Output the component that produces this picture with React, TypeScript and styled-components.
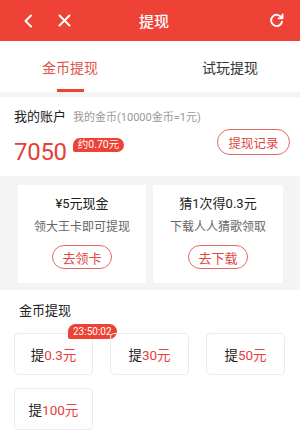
import React, { useState } from 'react'
import styled, { createGlobalStyle } from 'styled-components'

const RED = '#ee4237'
const TEXT_RED = '#e5403a'

const GlobalStyle = createGlobalStyle`
  html, body {
    margin: 0;
    padding: 0;
    background: #f4f4f4;
  }
  body {
    font-family: Roboto, "Noto Sans CJK SC", sans-serif;
    color: #333;
  }
`

const Page = styled.div`
  width: 300px;
  height: 446px;
  overflow: hidden;
  background: #f4f4f4;
  display: flex;
  flex-direction: column;
`

const Header = styled.header`
  height: 41px;
  background: ${RED};
  display: flex;
  align-items: center;
  padding: 0 14px 0 18px;
  color: #fff;
`

const IconButton = styled.span<{ $gap?: number }>`
  width: 20px;
  height: 20px;
  display: flex;
  align-items: center;
  justify-content: center;
  margin-right: ${(p) => p.$gap ?? 0}px;
`

const Title = styled.h1`
  flex: 1;
  margin: 0;
  text-align: center;
  font-size: 15px;
  font-weight: 500;
  padding-right: 32px;
`

const Tabs = styled.nav`
  height: 51px;
  background: #fff;
  display: flex;
  justify-content: space-between;
  margin-bottom: 5px;
`

const Tab = styled.div<{ $active?: boolean }>`
  width: 140px;
  position: relative;
  display: flex;
  align-items: center;
  justify-content: center;
  font-size: 14px;
  color: ${(p) => (p.$active ? '#e2534c' : '#333')};

  &::after {
    content: '';
    display: ${(p) => (p.$active ? 'block' : 'none')};
    position: absolute;
    bottom: 0;
    left: 50%;
    width: 27px;
    height: 3px;
    margin-left: -13px;
    background: ${RED};
  }
`

const Account = styled.section`
  background: #fff;
  height: 79px;
  box-sizing: border-box;
  padding: 11px 10px 0 14px;
  display: flex;
  align-items: center;
`

const AccountInfo = styled.div`
  flex: 1;
  align-self: flex-start;
`

const AccountHead = styled.div`
  display: flex;
  align-items: baseline;
  line-height: 18px;
`

const AccountTitle = styled.span`
  font-size: 13px;
  color: #222;
`

const AccountNote = styled.span`
  font-size: 11px;
  color: #999;
  margin-left: 7px;
`

const AmountRow = styled.div`
  display: flex;
  align-items: flex-start;
  margin-top: 9px;
`

const Amount = styled.span`
  font-size: 24px;
  line-height: 32px;
  color: ${TEXT_RED};
  letter-spacing: -0.3px;
`

const Pill = styled.span<{ $h: number; $size: number }>`
  display: inline-block;
  white-space: nowrap;
  height: ${(p) => p.$h}px;
  line-height: ${(p) => p.$h}px;
  padding: 0 5px;
  background: ${RED};
  color: #fff;
  font-size: ${(p) => p.$size}px;
  border-radius: ${(p) => p.$h / 2}px ${(p) => p.$h / 2}px ${(p) => p.$h / 2}px 2px;
`

const AmountTag = styled(Pill)`
  margin: 2px 0 0 6px;
`

const OutlineButton = styled.button<{ $w: number; $h: number; $size: number }>`
  width: ${(p) => p.$w}px;
  height: ${(p) => p.$h}px;
  border: 1px solid #e16a64;
  border-radius: ${(p) => p.$h / 2}px;
  background: #fff;
  color: #de4a43;
  font-family: inherit;
  font-size: ${(p) => p.$size}px;
  padding: 0;
  cursor: pointer;
`

const Promos = styled.div`
  margin-top: 9px;
  padding: 0 17px 7px 18px;
  display: grid;
  grid-template-columns: 128px 1fr;
  gap: 7px;
`

const Promo = styled.div`
  background: #fff;
  height: 98px;
  display: flex;
  flex-direction: column;
  align-items: center;
  padding-top: 10px;
  box-sizing: border-box;
`

const PromoTitle = styled.div`
  font-size: 13px;
  line-height: 18px;
  color: #222;
`

const PromoDesc = styled.div`
  font-size: 12px;
  line-height: 18px;
  margin-top: 5px;
  color: #666;
  margin-bottom: 9px;
`

const Withdraw = styled.section`
  flex: 1;
  background: #fff;
  padding: 12px 13px 0 14px;
`

const SectionTitle = styled.div`
  font-size: 13px;
  line-height: 18px;
  color: #222;
  padding-left: 5px;
`

const OptionGrid = styled.div`
  margin-top: 13px;
  display: grid;
  grid-template-columns: repeat(3, 79px);
  column-gap: 17px;
  row-gap: 13px;
`

const Option = styled.div`
  position: relative;
  height: 42px;
  border: 1px solid #ececec;
  border-radius: 4px;
  box-sizing: border-box;
  display: flex;
  align-items: center;
  justify-content: center;
  font-size: 13.5px;
  color: #222;
`

const OptionValue = styled.span`
  color: ${TEXT_RED};
`

const Countdown = styled(Pill)`
  position: absolute;
  top: -10px;
  left: 53px;
`

const BackIcon = () => (
  <svg width="10" height="14" viewBox="0 0 10 14">
    <path d="M8 1.5L2.5 7L8 12.5" fill="none" stroke="#fff" strokeWidth="2" strokeLinecap="round" strokeLinejoin="round" />
  </svg>
)

const CloseIcon = () => (
  <svg width="13" height="13" viewBox="0 0 13 13">
    <path d="M1.5 1.5L11.5 11.5M11.5 1.5L1.5 11.5" fill="none" stroke="#fff" strokeWidth="2" strokeLinecap="round" />
  </svg>
)

const RefreshIcon = () => (
  <svg width="15" height="15" viewBox="0 0 14 14">
    <path d="M11.6 4.2A5.2 5.2 0 1 0 12.2 8.2" fill="none" stroke="#fff" strokeWidth="1.8" strokeLinecap="round" />
    <path d="M12.6 1.4V5H9" fill="none" stroke="#fff" strokeWidth="1.8" strokeLinecap="round" strokeLinejoin="round" />
  </svg>
)

const promos = [
  { title: '¥5元现金', desc: '领大王卡即可提现', action: '去领卡' },
  { title: '猜1次得0.3元', desc: '下载人人猜歌领取', action: '去下载' },
]

const options = [
  { value: '0.3元', badge: '23:50:02' },
  { value: '30元' },
  { value: '50元' },
  { value: '100元' },
]

const App = (): JSX.Element => {
  const [tab, setTab] = useState<number>(0)

  return (
    <Page>
      <GlobalStyle />
      <Header>
        <IconButton $gap={16}>
          <BackIcon />
        </IconButton>
        <IconButton>
          <CloseIcon />
        </IconButton>
        <Title>提现</Title>
        <IconButton>
          <RefreshIcon />
        </IconButton>
      </Header>

      <Tabs>
        {['金币提现', '试玩提现'].map((name, i) => (
          <Tab key={name} $active={tab === i} onClick={() => setTab(i)}>
            {name}
          </Tab>
        ))}
      </Tabs>

      <Account>
        <AccountInfo>
          <AccountHead>
            <AccountTitle>我的账户</AccountTitle>
            <AccountNote>我的金币(10000金币=1元)</AccountNote>
          </AccountHead>
          <AmountRow>
            <Amount>7050</Amount>
            <AmountTag $h={14} $size={10.5}>
              约0.70元
            </AmountTag>
          </AmountRow>
        </AccountInfo>
        <OutlineButton $w={73} $h={26} $size={12.5}>
          提现记录
        </OutlineButton>
      </Account>

      <Promos>
        {promos.map((p) => (
          <Promo key={p.action}>
            <PromoTitle>{p.title}</PromoTitle>
            <PromoDesc>{p.desc}</PromoDesc>
            <OutlineButton $w={60} $h={24} $size={13}>
              {p.action}
            </OutlineButton>
          </Promo>
        ))}
      </Promos>

      <Withdraw>
        <SectionTitle>金币提现</SectionTitle>
        <OptionGrid>
          {options.map((o) => (
            <Option key={o.value}>
              提<OptionValue>{o.value}</OptionValue>
              {o.badge ? (
                <Countdown $h={15} $size={10}>
                  {o.badge}
                </Countdown>
              ) : (
                ''
              )}
            </Option>
          ))}
        </OptionGrid>
      </Withdraw>
    </Page>
  )
}

export default App
